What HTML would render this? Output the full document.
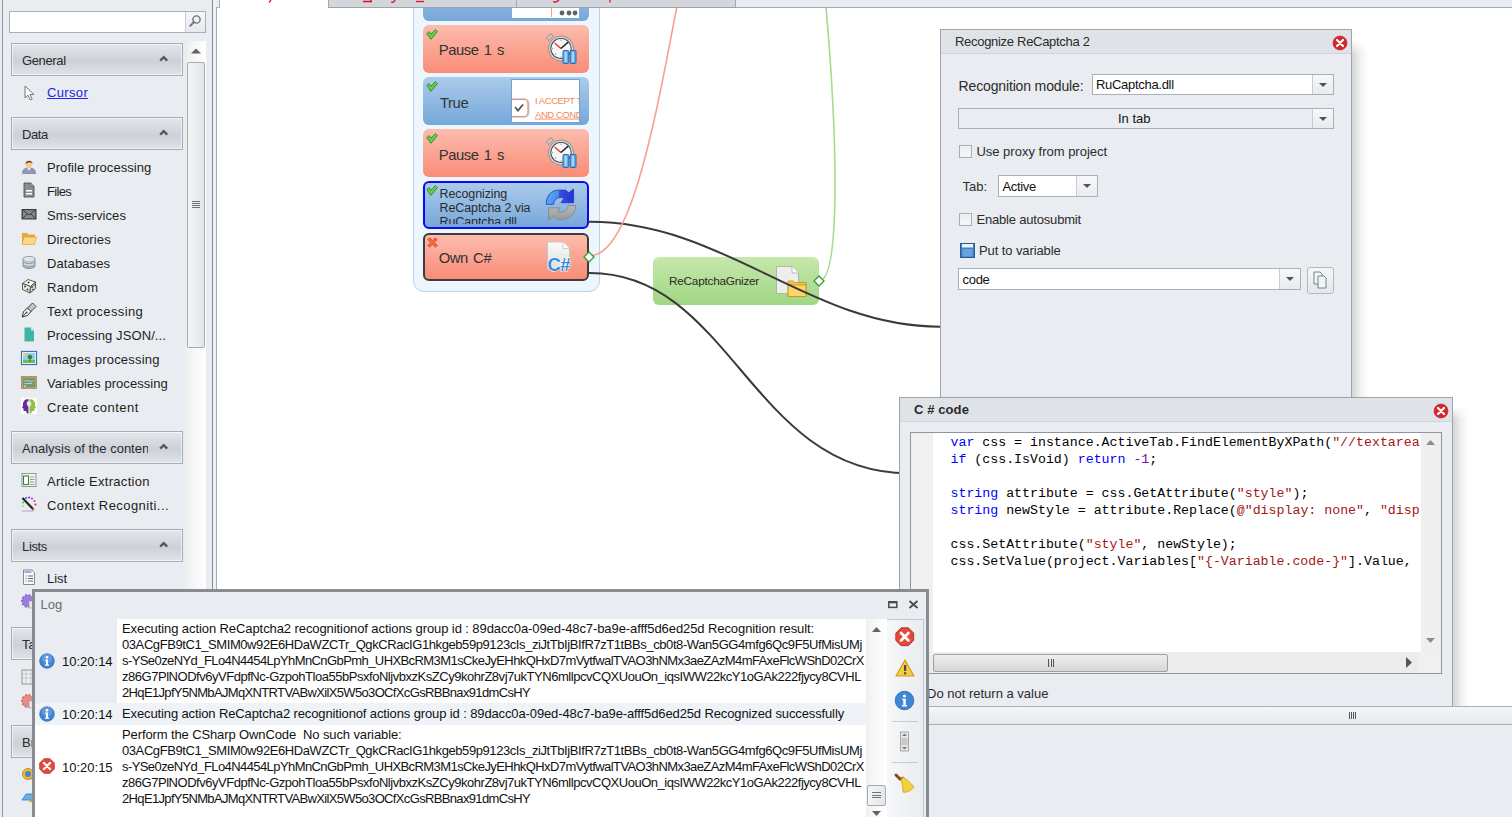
<!DOCTYPE html><html><head><meta charset="utf-8"><style>
html,body{margin:0;padding:0;width:1512px;height:817px;overflow:hidden;background:#e9ecf0;font-family:"Liberation Sans",sans-serif;}
.t{position:absolute;white-space:nowrap;}
.b{position:absolute;box-sizing:border-box;}
svg{position:absolute;overflow:visible;}
</style></head><body>
<div class="b" style="left:2px;top:0px;width:1px;height:817px;background:#8d939b"></div>
<div class="b" style="left:9px;top:11px;width:197px;height:22px;background:#fff;border:1px solid #a9b0b9"></div>
<div class="b" style="left:185px;top:12px;width:20px;height:20px;background:linear-gradient(#f5f7f9,#e6e9ed);border-left:1px solid #c9ced5"></div>
<svg style="left:188px;top:14px" width="14" height="14" viewBox="0 0 14 14"><circle cx="8.5" cy="5.5" r="3.6" fill="none" stroke="#6b7079" stroke-width="1.4"/><line x1="6" y1="8" x2="2.2" y2="11.8" stroke="#6b7079" stroke-width="1.8" stroke-linecap="round"/></svg>
<div class="b" style="left:186px;top:41px;width:20px;height:560px;background:linear-gradient(90deg,#eeeeee,#f7f7f7 40%,#fff)"></div>
<svg style="left:190px;top:47px" width="12" height="8"><polygon points="1,6.5 6,1.5 11,6.5" fill="#606469"/></svg>
<div class="b" style="left:187px;top:62px;width:18px;height:286px;background:linear-gradient(90deg,#f3f4f5,#e4e6e8);border:1px solid #a7acb3;border-radius:2px"></div>
<div class="b" style="left:192px;top:201px;width:8px;height:1px;background:#6e7379"></div>
<div class="b" style="left:192px;top:203px;width:8px;height:1px;background:#6e7379"></div>
<div class="b" style="left:192px;top:205px;width:8px;height:1px;background:#6e7379"></div>
<div class="b" style="left:192px;top:207px;width:8px;height:1px;background:#6e7379"></div>
<div class="b" style="left:212px;top:0px;width:1px;height:817px;background:#878d94"></div>
<div class="b" style="left:213px;top:0px;width:3px;height:817px;background:#eef1f4"></div>
<div class="b" style="left:216px;top:8px;width:1px;height:809px;background:#a5abb4"></div>
<div class="b" style="left:11px;top:43px;width:172px;height:33px;border:1px solid #a6adb6;background:linear-gradient(#e3e6ea,#d1d6dc 45%,#ccd1d8 55%,#e0e3e8);box-shadow:inset 0 0 0 1px rgba(255,255,255,.55)"></div>
<div class="t" style="left:22px;top:52.50px;font-size:13px;line-height:16px;color:#2b2b2b;letter-spacing:-0.364px;">General</div>
<svg style="left:158px;top:55px" width="12" height="8"><polyline points="2.2,5.6 5.7,2.1 9.2,5.6" fill="none" stroke="#55595f" stroke-width="2.4"/></svg>
<div class="b" style="left:11px;top:117px;width:172px;height:33px;border:1px solid #a6adb6;background:linear-gradient(#e3e6ea,#d1d6dc 45%,#ccd1d8 55%,#e0e3e8);box-shadow:inset 0 0 0 1px rgba(255,255,255,.55)"></div>
<div class="t" style="left:22px;top:126.50px;font-size:13px;line-height:16px;color:#2b2b2b;letter-spacing:-0.442px;">Data</div>
<svg style="left:158px;top:129px" width="12" height="8"><polyline points="2.2,5.6 5.7,2.1 9.2,5.6" fill="none" stroke="#55595f" stroke-width="2.4"/></svg>
<div class="b" style="left:11px;top:431px;width:172px;height:33px;border:1px solid #a6adb6;background:linear-gradient(#e3e6ea,#d1d6dc 45%,#ccd1d8 55%,#e0e3e8);box-shadow:inset 0 0 0 1px rgba(255,255,255,.55)"></div>
<div class="t" style="left:22px;top:440.50px;font-size:13px;line-height:16px;color:#2b2b2b;"><span style="display:inline-block;width:126px;overflow:hidden;vertical-align:top">Analysis of the content</span></div>
<svg style="left:158px;top:443px" width="12" height="8"><polyline points="2.2,5.6 5.7,2.1 9.2,5.6" fill="none" stroke="#55595f" stroke-width="2.4"/></svg>
<div class="b" style="left:11px;top:529px;width:172px;height:33px;border:1px solid #a6adb6;background:linear-gradient(#e3e6ea,#d1d6dc 45%,#ccd1d8 55%,#e0e3e8);box-shadow:inset 0 0 0 1px rgba(255,255,255,.55)"></div>
<div class="t" style="left:22px;top:538.50px;font-size:13px;line-height:16px;color:#2b2b2b;letter-spacing:-0.347px;">Lists</div>
<svg style="left:158px;top:541px" width="12" height="8"><polyline points="2.2,5.6 5.7,2.1 9.2,5.6" fill="none" stroke="#55595f" stroke-width="2.4"/></svg>
<div class="b" style="left:11px;top:627px;width:172px;height:33px;border:1px solid #a6adb6;background:linear-gradient(#e3e6ea,#d1d6dc 45%,#ccd1d8 55%,#e0e3e8);box-shadow:inset 0 0 0 1px rgba(255,255,255,.55)"></div>
<div class="t" style="left:22px;top:636.50px;font-size:13px;line-height:16px;color:#2b2b2b;">Tasks</div>
<svg style="left:158px;top:639px" width="12" height="8"><polyline points="2.2,5.6 5.7,2.1 9.2,5.6" fill="none" stroke="#55595f" stroke-width="2.4"/></svg>
<div class="b" style="left:11px;top:725px;width:172px;height:33px;border:1px solid #a6adb6;background:linear-gradient(#e3e6ea,#d1d6dc 45%,#ccd1d8 55%,#e0e3e8);box-shadow:inset 0 0 0 1px rgba(255,255,255,.55)"></div>
<div class="t" style="left:22px;top:734.50px;font-size:13px;line-height:16px;color:#2b2b2b;">Browser</div>
<svg style="left:158px;top:737px" width="12" height="8"><polyline points="2.2,5.6 5.7,2.1 9.2,5.6" fill="none" stroke="#55595f" stroke-width="2.4"/></svg>
<svg style="left:24px;top:85px" width="12" height="16" viewBox="0 0 12 16"><path d="M1,1 L1,13 L4,10.2 L6.3,15 L8.2,14.1 L6,9.5 L10,9.5 Z" fill="#fff" stroke="#777" stroke-width="1"/></svg>
<div class="t" style="left:47px;top:85.00px;font-size:13px;line-height:16px;color:#2222ee;letter-spacing:0.347px;text-decoration:underline;">Cursor</div>
<svg style="left:21px;top:158px" width="16" height="16" viewBox="0 0 16 16"><path d="M1.5,15.5 C1.5,11.2 4,10 8,10 C12,10 14.5,11.2 14.5,15.5 Z" fill="#8d98b8" stroke="#6a7496" stroke-width=".6"/><path d="M6,10.2 L8,12.5 L10,10.2" fill="#fff"/><circle cx="8" cy="6.3" r="3.3" fill="#f6c797"/><path d="M4.6,6.2 C4,2.2 11.5,1.5 11.6,5.5 C10.2,4.2 6.5,4 4.6,6.2Z" fill="#7a4414"/></svg>
<div class="t" style="left:47px;top:160.00px;font-size:13px;line-height:16px;color:#1e1e1e;letter-spacing:0.054px;">Profile processing</div>
<svg style="left:21px;top:182px" width="16" height="16" viewBox="0 0 16 16"><path d="M3,1 H10 L13,4 V15 H3 Z" fill="#8c8c8c" stroke="#505050" stroke-width=".9"/><path d="M10,1 V4 H13" fill="#c8c8c8" stroke="#505050" stroke-width=".6"/><rect x="5" y="8" width="6" height="1.5" fill="#fff"/><rect x="5" y="11" width="6" height="1.5" fill="#fff"/></svg>
<div class="t" style="left:47px;top:184.00px;font-size:13px;line-height:16px;color:#1e1e1e;letter-spacing:-0.651px;">Files</div>
<svg style="left:21px;top:206px" width="16" height="16" viewBox="0 0 16 16"><rect x="0.5" y="3" width="15" height="10.5" fill="#3e3e3e"/><rect x="1.8" y="4.2" width="12.4" height="8.1" fill="#8a8a8a"/><path d="M1.8,4.2 L8,9 L14.2,4.2 M1.8,12.3 L6.2,7.8 M14.2,12.3 L9.8,7.8" fill="none" stroke="#333" stroke-width=".9"/></svg>
<div class="t" style="left:47px;top:208.00px;font-size:13px;line-height:16px;color:#1e1e1e;letter-spacing:0.082px;">Sms-services</div>
<svg style="left:21px;top:230px" width="16" height="16" viewBox="0 0 16 16"><path d="M1,3 H6 L7.5,4.5 H14 V14 H1 Z" fill="#e8a93a"/><path d="M3,7 H15.5 L13.5,14.5 H1 Z" fill="#f9d87f" stroke="#d49a2a" stroke-width=".6"/></svg>
<div class="t" style="left:47px;top:232.00px;font-size:13px;line-height:16px;color:#1e1e1e;letter-spacing:0.161px;">Directories</div>
<svg style="left:21px;top:254px" width="16" height="16" viewBox="0 0 16 16"><rect x="2" y="2.5" width="12" height="12" rx="6" ry="2.6" fill="#b9c3cb" stroke="#7f8a93" stroke-width=".9"/><ellipse cx="8" cy="5" rx="5.5" ry="2.2" fill="#dfe5ea"/><path d="M2.2,8.5 Q8,11.5 13.8,8.5 M2.2,11.5 Q8,14.5 13.8,11.5" fill="none" stroke="#8f99a2" stroke-width=".9"/><path d="M3,9.8 Q8,12.3 13,9.8" fill="none" stroke="#e8edf0" stroke-width=".8"/></svg>
<div class="t" style="left:47px;top:256.00px;font-size:13px;line-height:16px;color:#1e1e1e;letter-spacing:0.116px;">Databases</div>
<svg style="left:21px;top:278px" width="16" height="16" viewBox="0 0 16 16"><path d="M1.5,5.5 L7,1.5 L14.5,4 L9.5,8.5 Z" fill="#fbfbf5" stroke="#4a4a4a" stroke-width=".9" stroke-linejoin="round"/><path d="M1.5,5.5 L9.5,8.5 L9,15 L1.5,11.5 Z" fill="#ecebe2" stroke="#4a4a4a" stroke-width=".9" stroke-linejoin="round"/><path d="M9.5,8.5 L14.5,4 L14.5,10.5 L9,15 Z" fill="#dcdbd0" stroke="#4a4a4a" stroke-width=".9" stroke-linejoin="round"/><circle cx="7.5" cy="4.5" r="1" fill="#333"/><circle cx="4" cy="8.5" r=".9" fill="#333"/><circle cx="6.5" cy="11.5" r=".9" fill="#333"/><circle cx="11" cy="9" r=".9" fill="#333"/><circle cx="13" cy="7" r=".8" fill="#333"/><circle cx="12" cy="11.5" r=".8" fill="#333"/></svg>
<div class="t" style="left:47px;top:280.00px;font-size:13px;line-height:16px;color:#1e1e1e;letter-spacing:0.377px;">Random</div>
<svg style="left:21px;top:302px" width="16" height="16" viewBox="0 0 16 16"><path d="M1.2,15 L2.5,9.5 L6.5,6 L10,9.5 L6.5,13.5 Z" fill="#f2f2f2" stroke="#3a3a3a" stroke-width="1"/><path d="M1.2,15 L5.2,10.8" stroke="#3a3a3a" stroke-width=".9"/><circle cx="5.5" cy="10.5" r=".9" fill="#3a3a3a"/><path d="M6.5,6 L11.5,1 L15,4.5 L10,9.5 Z" fill="#d8d8d8" stroke="#3a3a3a" stroke-width="1"/><path d="M8,4.5 L11.5,8 M9.5,3 L13,6.5" stroke="#8a8a8a" stroke-width=".8"/></svg>
<div class="t" style="left:47px;top:304.00px;font-size:13px;line-height:16px;color:#1e1e1e;letter-spacing:0.391px;">Text processing</div>
<svg style="left:21px;top:326px" width="16" height="16" viewBox="0 0 16 16"><path d="M3.5,1.5 H10 L13,4.5 V15.5 H3.5 Z" fill="#3fb5a3"/><path d="M10,1.5 L13,4.5 H10Z" fill="#c9eee8"/></svg>
<div class="t" style="left:47px;top:328.00px;font-size:13px;line-height:16px;color:#1e1e1e;letter-spacing:0.103px;">Processing JSON/...</div>
<svg style="left:21px;top:350px" width="16" height="16" viewBox="0 0 16 16"><rect x="0.5" y="1.5" width="15" height="13" fill="#fff" stroke="#3b73b9" stroke-width="1.2"/><rect x="2" y="3" width="12" height="10" fill="#8fd0f0"/><rect x="2" y="10" width="12" height="3" fill="#6fbf3f"/><circle cx="3.5" cy="4.5" r="1.5" fill="#ffd23a"/><circle cx="9" cy="7" r="2.3" fill="#2e8a2e"/><rect x="8.5" y="8.5" width="1" height="3" fill="#7a4a22"/></svg>
<div class="t" style="left:47px;top:352.00px;font-size:13px;line-height:16px;color:#1e1e1e;letter-spacing:0.21px;">Images processing</div>
<svg style="left:21px;top:374px" width="16" height="16" viewBox="0 0 16 16"><rect x="0.5" y="2.5" width="15" height="12" fill="#c49a5a" stroke="#9a7038" stroke-width=".6"/><rect x="2" y="4" width="12" height="9" fill="#6d9a7a"/><path d="M3.5,7 Q6,6 8,7 T12.5,7 M3.5,9.5 H11" stroke="#d8e8dc" stroke-width=".7" fill="none"/><path d="M3,13 L5,11" stroke="#fff" stroke-width=".8"/></svg>
<div class="t" style="left:47px;top:376.00px;font-size:13px;line-height:16px;color:#1e1e1e;letter-spacing:0.054px;">Variables processing</div>
<svg style="left:21px;top:398px" width="16" height="16" viewBox="0 0 16 16"><rect x="0" y="0" width="16" height="16" fill="#fff"/><path d="M7.5,1 C3,1 1.5,4.5 2,7.5 L1,10 L2.5,10.5 L2.5,13 L5,13 L6,15.5 L7.5,15.5 Z" fill="#6a2a9a"/><path d="M8.5,1 C13,1 14.5,4.5 14,7.5 L15,10 L13.5,10.5 L13.5,13 L11,13 L10,15.5 L8.5,15.5 Z" fill="#8fc43f"/><path d="M6,4 Q8,2.5 10,4 Q11,7 8,9 Q5,7 6,4Z" fill="#e8e8ee"/></svg>
<div class="t" style="left:47px;top:400.00px;font-size:13px;line-height:16px;color:#1e1e1e;letter-spacing:0.466px;">Create content</div>
<svg style="left:21px;top:472px" width="16" height="16" viewBox="0 0 16 16"><rect x="1" y="1.5" width="14" height="13" fill="#f4f4f4" stroke="#8d8d8d" stroke-width=".9"/><rect x="2.5" y="4" width="5" height="8.5" fill="#fff" stroke="#2e8a2e" stroke-width="1.1"/><path d="M9,5 H13.5 M9,7.5 H13.5 M9,10 H13.5 M9,12.5 H13.5" stroke="#999" stroke-width="1"/></svg>
<div class="t" style="left:47px;top:474.00px;font-size:13px;line-height:16px;color:#1e1e1e;letter-spacing:0.292px;">Article Extraction</div>
<svg style="left:21px;top:496px" width="16" height="16" viewBox="0 0 16 16"><path d="M1.5,2 L12.5,13.5" stroke="#222" stroke-width="2.2"/><path d="M11,12 L14,15 L13,12.5Z" fill="#d0a040"/><circle cx="5" cy="2" r="1.1" fill="#3b6bdb"/><circle cx="8" cy="1.5" r="1.1" fill="#7a3adb"/><circle cx="11" cy="2.5" r="1.1" fill="#b03adb"/><circle cx="13.5" cy="5" r="1.1" fill="#db3a9a"/><circle cx="14.5" cy="8.5" r="1.1" fill="#db3a3a"/><circle cx="2" cy="6.5" r="1.1" fill="#3adb5a"/><circle cx="2" cy="10" r="1.1" fill="#c8db3a"/><path d="M1,15 H13" stroke="#aa88cc" stroke-width=".8"/></svg>
<div class="t" style="left:47px;top:498.00px;font-size:13px;line-height:16px;color:#1e1e1e;letter-spacing:0.427px;">Context Recogniti...</div>
<svg style="left:21px;top:569px" width="16" height="16" viewBox="0 0 16 16"><path d="M2.5,1 H11 L13.5,3.5 V15.5 H2.5 Z" fill="#fbfbfd" stroke="#7d7d85" stroke-width=".9"/><rect x="3.5" y="2" width="7" height="2" fill="#b49ee8"/><path d="M4.5,7 H5.5 M7,7 H12 M4.5,9.5 H5.5 M7,9.5 H12 M4.5,12 H5.5 M7,12 H12" stroke="#555" stroke-width=".9"/></svg>
<div class="t" style="left:47px;top:571.00px;font-size:13px;line-height:16px;color:#1e1e1e;letter-spacing:-0.009px;">List</div>
<svg style="left:21px;top:593px" width="16" height="16" viewBox="0 0 16 16"><circle cx="7" cy="8" r="6" fill="#9b7fdc" stroke="#8a6ad0" stroke-width="2" stroke-dasharray="2 1.5"/><rect x="8" y="8" width="6" height="7" fill="#e8e8e8" stroke="#999" stroke-width=".6"/></svg>
<svg style="left:21px;top:669px" width="16" height="16" viewBox="0 0 16 16"><rect x="1" y="1" width="14" height="14" fill="#f0f0f0" stroke="#888" stroke-width=".9"/><path d="M1,5 H15 M1,9 H15 M5,1 V15 M10,1 V15" stroke="#bbb" stroke-width=".8"/></svg>
<svg style="left:21px;top:693px" width="16" height="16" viewBox="0 0 16 16"><circle cx="7" cy="8" r="6" fill="#e88a8a" stroke="#d46a6a" stroke-width="2" stroke-dasharray="2 1.5"/><rect x="8" y="8" width="6" height="7" fill="#e8e8e8" stroke="#999" stroke-width=".6"/></svg>
<svg style="left:21px;top:767px" width="16" height="16" viewBox="0 0 16 16"><circle cx="7" cy="7" r="5.5" fill="#f4b63a" stroke="#d48a1a" stroke-width="1"/><circle cx="7" cy="7" r="3" fill="#3a8ad4"/><path d="M9,11 L14,15 L15,13Z" fill="#3a7ad4"/></svg>
<svg style="left:21px;top:790px" width="16" height="16" viewBox="0 0 16 16"><path d="M1,10 L5,4 H15 L12,10 Z" fill="#6cb0e8" stroke="#3a7ac0" stroke-width=".8"/><path d="M9,12 L14,6" stroke="#d49a2a" stroke-width="2"/></svg>
<div class="b" style="left:217px;top:8px;width:1295px;height:809px;background:#fff"></div>
<div class="b" style="left:216px;top:0px;width:1296px;height:8px;background:#e9ecf0"></div>
<div class="b" style="left:216px;top:7px;width:1296px;height:1px;background:#a5abb4"></div>
<div class="b" style="left:219px;top:0px;width:109px;height:8px;background:#fff;border-left:1px solid #a5abb4"></div>
<div class="b" style="left:328px;top:0px;width:408px;height:8px;background:#d3d6db;border-left:1px solid #a0a6ae;border-right:1px solid #a0a6ae;border-bottom:1px solid #9ea4ad"></div>
<div class="b" style="left:516px;top:0px;width:1px;height:8px;background:#a0a6ae"></div>
<svg style="left:0;top:0" width="1512" height="8"><g stroke="#e0102a" stroke-width="1.3" fill="none"><path d="M271,0 L269,2.5"/><path d="M363,1.5 H372 M371,0 V2.5"/><path d="M391,2 Q394,3 395,0"/><path d="M416,1.5 H424"/><path d="M553,1.5 Q556,3 559,0"/><path d="M610,0 V2.5"/></g></svg>
<div class="b" style="left:413px;top:-20px;width:187px;height:312px;background:#edf5fd;border:1px solid #b9d3ef;border-radius:0 0 11px 11px"></div>
<div class="b" style="left:423px;top:-27px;width:166px;height:48px;background:linear-gradient(#abcbea,#76a7da);border-radius:6px"></div>
<div class="b" style="left:512px;top:8px;width:67px;height:10px;background:#fff"></div>
<div class="b" style="left:551px;top:8px;width:1px;height:9px;background:#f7a070"></div>
<svg style="left:559px;top:9.5px" width="6" height="6"><circle cx="3" cy="3" r="2.4" fill="#616161"/></svg>
<svg style="left:565.8px;top:9.5px" width="6" height="6"><circle cx="3" cy="3" r="2.4" fill="#616161"/></svg>
<svg style="left:572px;top:9.5px" width="6" height="6"><circle cx="3" cy="3" r="2.4" fill="#616161"/></svg>
<div class="b" style="left:423px;top:25px;width:166px;height:48px;background:linear-gradient(#fcbcae,#f98c77);border-radius:6px"></div>
<svg style="left:426px;top:29px" width="12" height="12" viewBox="0 0 12 12"><path d="M0.8,4.6 L3,2.6 L4.9,5.2 L9.4,0.6 L11.4,2.6 L4.9,10.4 Z" fill="#67cc48" stroke="#2b8a2a" stroke-width=".9" stroke-linejoin="round"/></svg>
<div class="t" style="left:438.7px;top:41.27px;font-size:14.8px;line-height:18px;color:#333;letter-spacing:-0.4px;word-spacing:1.5px;">Pause 1 s</div>
<svg style="left:546px;top:33.5px" width="32" height="32" viewBox="0 0 32 32">
<path d="M0.3,4.2 L4.8,-0.3 L7.2,2.1 L2.7,6.6Z" fill="#c8c8c8" stroke="#7a7a7a" stroke-width=".7"/>
<circle cx="15" cy="14.5" r="12.6" fill="#d0d0d0" stroke="#8c8c8c" stroke-width=".9"/>
<circle cx="15" cy="14.5" r="10.6" fill="#3c3c3c"/>
<circle cx="15" cy="14.5" r="9.7" fill="#f6f6f6"/>
<g fill="#9a9a9a"><rect x="14.4" y="5.6" width="1.2" height="1.2"/><rect x="6" y="14" width="1.2" height="1.2"/><rect x="9" y="19.5" width="1.2" height="1.2"/><rect x="14.4" y="22.4" width="1.2" height="1.2"/><rect x="8.5" y="8.5" width="1.2" height="1.2"/><rect x="20.5" y="8" width="1.2" height="1.2"/></g>
<line x1="15" y1="14.5" x2="9" y2="9.5" stroke="#e8200c" stroke-width="1.1"/>
<line x1="15" y1="14.5" x2="22" y2="8.3" stroke="#1e1e1e" stroke-width="1.5"/>
<rect x="17" y="16.5" width="5.8" height="13" rx="1" fill="#62aaea" stroke="#2a6cb2" stroke-width="1"/>
<rect x="24.2" y="16.5" width="5.8" height="13" rx="1" fill="#62aaea" stroke="#2a6cb2" stroke-width="1"/>
<rect x="18.6" y="18" width="2.2" height="10" fill="#a6d4fa"/><rect x="25.8" y="18" width="2.2" height="10" fill="#a6d4fa"/>
</svg>
<div class="b" style="left:423px;top:77px;width:166px;height:48px;background:linear-gradient(#abcbea,#76a7da);border-radius:6px"></div>
<svg style="left:426px;top:81px" width="12" height="12" viewBox="0 0 12 12"><path d="M0.8,4.6 L3,2.6 L4.9,5.2 L9.4,0.6 L11.4,2.6 L4.9,10.4 Z" fill="#67cc48" stroke="#2b8a2a" stroke-width=".9" stroke-linejoin="round"/></svg>
<div class="t" style="left:440px;top:93.87px;font-size:14.8px;line-height:18px;color:#333;letter-spacing:-0.4px;word-spacing:1.5px;">True</div>
<div class="b" style="left:511px;top:79px;width:69px;height:44px;background:#fff;border:1px solid #6fa3d6"></div>
<svg style="left:512px;top:80px;overflow:hidden" width="67" height="42" viewBox="0 0 67 42">
<rect x="-3" y="19.5" width="19" height="17" rx="4" fill="#fff" stroke="#bfe6fb" stroke-width="3.5"/><rect x="-3" y="19.5" width="19" height="17" rx="4" fill="#fff" stroke="#f08a50" stroke-width="1.2"/>
<path d="M3,27 L6,30.5 L11,24.5" fill="none" stroke="#555" stroke-width="1.8"/>
<text x="23" y="24" font-family="Liberation Sans" font-size="9.5" fill="#f2885a" letter-spacing="-0.45">I ACCEPT T</text>
<text x="23" y="38" font-family="Liberation Sans" font-size="9.5" fill="#f2885a" letter-spacing="-0.45">AND CONDI</text><rect x="23" y="38.6" width="44" height=".9" fill="#f2885a"/>
</svg>
<div class="b" style="left:423px;top:129px;width:166px;height:48px;background:linear-gradient(#fcbcae,#f98c77);border-radius:6px"></div>
<svg style="left:426px;top:133px" width="12" height="12" viewBox="0 0 12 12"><path d="M0.8,4.6 L3,2.6 L4.9,5.2 L9.4,0.6 L11.4,2.6 L4.9,10.4 Z" fill="#67cc48" stroke="#2b8a2a" stroke-width=".9" stroke-linejoin="round"/></svg>
<div class="t" style="left:438.7px;top:145.57px;font-size:14.8px;line-height:18px;color:#333;letter-spacing:-0.4px;word-spacing:1.5px;">Pause 1 s</div>
<svg style="left:546px;top:137.5px" width="32" height="32" viewBox="0 0 32 32">
<path d="M0.3,4.2 L4.8,-0.3 L7.2,2.1 L2.7,6.6Z" fill="#c8c8c8" stroke="#7a7a7a" stroke-width=".7"/>
<circle cx="15" cy="14.5" r="12.6" fill="#d0d0d0" stroke="#8c8c8c" stroke-width=".9"/>
<circle cx="15" cy="14.5" r="10.6" fill="#3c3c3c"/>
<circle cx="15" cy="14.5" r="9.7" fill="#f6f6f6"/>
<g fill="#9a9a9a"><rect x="14.4" y="5.6" width="1.2" height="1.2"/><rect x="6" y="14" width="1.2" height="1.2"/><rect x="9" y="19.5" width="1.2" height="1.2"/><rect x="14.4" y="22.4" width="1.2" height="1.2"/><rect x="8.5" y="8.5" width="1.2" height="1.2"/><rect x="20.5" y="8" width="1.2" height="1.2"/></g>
<line x1="15" y1="14.5" x2="9" y2="9.5" stroke="#e8200c" stroke-width="1.1"/>
<line x1="15" y1="14.5" x2="22" y2="8.3" stroke="#1e1e1e" stroke-width="1.5"/>
<rect x="17" y="16.5" width="5.8" height="13" rx="1" fill="#62aaea" stroke="#2a6cb2" stroke-width="1"/>
<rect x="24.2" y="16.5" width="5.8" height="13" rx="1" fill="#62aaea" stroke="#2a6cb2" stroke-width="1"/>
<rect x="18.6" y="18" width="2.2" height="10" fill="#a6d4fa"/><rect x="25.8" y="18" width="2.2" height="10" fill="#a6d4fa"/>
</svg>
<div class="b" style="left:423px;top:181px;width:166px;height:48px;background:linear-gradient(#abcbea,#76a7da);border:2px solid #0a0aee;border-radius:6px"></div>
<svg style="left:426px;top:185px" width="12" height="12" viewBox="0 0 12 12"><path d="M0.8,4.6 L3,2.6 L4.9,5.2 L9.4,0.6 L11.4,2.6 L4.9,10.4 Z" fill="#67cc48" stroke="#2b8a2a" stroke-width=".9" stroke-linejoin="round"/></svg>
<div class="b" style="left:439px;top:186px;width:100px;height:38px;overflow:hidden">
<div class="t" style="left:0.5px;top:0.27px;font-size:12.5px;line-height:16px;color:#2a2a2a;letter-spacing:-0.1px;">Recognizing</div>
<div class="t" style="left:0.5px;top:14.27px;font-size:12.5px;line-height:16px;color:#2a2a2a;letter-spacing:-0.1px;">ReCaptcha 2 via</div>
<div class="t" style="left:0.5px;top:28.27px;font-size:12.5px;line-height:16px;color:#2a2a2a;letter-spacing:-0.1px;">RuCaptcha.dll</div>
</div>
<svg style="left:545px;top:189px" width="32" height="32" viewBox="0 0 32 32">
<defs><linearGradient id="gb" x1="0" x2="1" y1="0" y2="0"><stop offset="0" stop-color="#5aa6f2"/><stop offset=".45" stop-color="#4a8ff0"/><stop offset=".46" stop-color="#3a4fe0"/><stop offset="1" stop-color="#2a2fcf"/></linearGradient>
<linearGradient id="gg" x1="0" x2="0" y1="0" y2="1"><stop offset="0" stop-color="#b8b8b8"/><stop offset="1" stop-color="#9a9a9a"/></linearGradient></defs>
<path d="M1.2,15.3 C1.2,6.5 6.5,1.1 13.7,1.1 L20.5,1.1 L23.8,3.8 L28,0.3 L28.6,0.3 L28.6,13.7 L16,13.7 L19,9.6 C17,8.4 15.5,8.3 14,8.6 C10.5,9.5 8.6,12 8.6,15.3 Z" fill="url(#gb)" stroke="#1f3acb" stroke-width=".8" stroke-linejoin="round"/>
<path d="M30.5,16.5 C30.5,25 25,30.2 17,30.2 L11.5,30.2 L8.2,27.5 L4,31 L3.5,31 L3.5,18.8 L15.1,18.8 L12.5,22.5 C14,23.3 15.5,23.3 17,23 C20.5,22.5 23,20 23,16.5 Z" fill="url(#gg)" stroke="#858585" stroke-width=".8" stroke-linejoin="round"/>
</svg>
<div class="b" style="left:423px;top:233px;width:166px;height:48px;background:linear-gradient(#fcbcae,#f98c77);border:2px solid #3c3c3c;border-radius:6px"></div>
<svg style="left:426.5px;top:236.5px" width="11" height="11" viewBox="0 0 11 11"><path d="M0.8,2.6 L2.6,0.8 L5.5,3.6 L8.4,0.8 L10.2,2.6 L7.3,5.5 L10.2,8.4 L8.4,10.2 L5.5,7.3 L2.6,10.2 L0.8,8.4 L3.7,5.5Z" fill="#f86a48" stroke="#d03a1e" stroke-width=".8" stroke-linejoin="round"/></svg>
<div class="t" style="left:438.7px;top:249.27px;font-size:14.8px;line-height:18px;color:#333;letter-spacing:-0.4px;word-spacing:1.5px;">Own C#</div>
<svg style="left:546px;top:241px" width="32" height="32" viewBox="0 0 32 32">
<defs><linearGradient id="gd" x1="0" x2="0" y1="0" y2="1"><stop offset="0" stop-color="#fafafa"/><stop offset="1" stop-color="#dedede"/></linearGradient></defs>
<path d="M1.5,1 L17,1 L23.5,7.5 L23.5,28 L1.5,28 Z" fill="url(#gd)" stroke="#c2c2c2" stroke-width=".8"/>
<path d="M17,1 L17,7.5 L23.5,7.5" fill="#fff" stroke="#c2c2c2" stroke-width=".8"/>
<text x="1.5" y="29.5" font-family="Liberation Sans" font-weight="bold" font-size="18.5" fill="#3b8ad6" stroke="#fff" stroke-width="1.2" paint-order="stroke" letter-spacing="-0.5">C#</text>
</svg>
<div class="b" style="left:653px;top:257px;width:166px;height:48px;background:linear-gradient(#c6e8ac,#a0d683);border-radius:6px"></div>
<div class="t" style="left:669px;top:274.41px;font-size:11.8px;line-height:15px;color:#2a2a2a;letter-spacing:-0.25px;">ReCaptchaGnizer</div>
<svg style="left:775px;top:265px" width="34" height="34" viewBox="0 0 34 34">
<path d="M1.5,1.5 L17,1.5 L23.5,8 L23.5,28.5 L1.5,28.5 Z" fill="#eeeeee" stroke="#a8a8a8" stroke-width=".8"/>
<path d="M17,1.5 L17,8 L23.5,8" fill="#fff" stroke="#a8a8a8" stroke-width=".8"/>
<path d="M13,16 L18.5,16 L20,17.5 L31,17.5 L31,31.5 L13,31.5 Z" fill="#f5c14a" stroke="#c8901e" stroke-width=".8"/>
<rect x="13" y="20" width="18" height="11.5" fill="#fbd56a" stroke="#c8901e" stroke-width=".8"/>
</svg>
<svg style="left:0;top:0" width="1512" height="817">
<path d="M588,221.8 L590.0,221.8 C725.5,221.8 808.8,326.7 940.0,326.7 L960,326.7" fill="none" stroke="#3a3a3a" stroke-width="2"/>
<path d="M588,273 L590.0,273 C730.9,273.0 752.1,473.3 908.4,473.3 L920,473.3" fill="none" stroke="#3a3a3a" stroke-width="2"/>
<path d="M590.0,255.6 C653.9,255.6 678.5,-83.0 703.7,-83.0" fill="none" stroke="#f8a08e" stroke-width="1.6"/>
<path d="M819.0,280.8 C861.0,280.8 811.2,-259.5 774.7,-259.5" fill="none" stroke="#a6dc8c" stroke-width="1.6"/>
<polygon points="589,252 594,257 589,262 584,257" fill="#fff" stroke="#38a03a" stroke-width="1.4"/>
<polygon points="819,276 824,281 819,286 814,281" fill="#fff" stroke="#38a03a" stroke-width="1.4"/>
</svg>
<div class="b" style="left:216px;top:0px;width:1296px;height:7px;background:#e9ecf0"></div>
<div class="b" style="left:216px;top:7px;width:1296px;height:1px;background:#a5abb4"></div>
<div class="b" style="left:219px;top:0px;width:109px;height:8px;background:#fff;border-left:1px solid #a5abb4"></div>
<div class="b" style="left:328px;top:0px;width:408px;height:8px;background:#d3d6db;border-left:1px solid #a0a6ae;border-right:1px solid #a0a6ae;border-bottom:1px solid #9ea4ad"></div>
<div class="b" style="left:516px;top:0px;width:1px;height:8px;background:#a0a6ae"></div>
<svg style="left:0;top:0" width="1512" height="8"><g stroke="#e0102a" stroke-width="1.3" fill="none"><path d="M271,0 L269,2.5"/><path d="M363,1.5 H372 M371,0 V2.5"/><path d="M391,2 Q394,3 395,0"/><path d="M416,1.5 H424"/><path d="M553,1.5 Q556,3 559,0"/><path d="M610,0 V2.5"/></g></svg>
<div class="b" style="left:1352px;top:40px;width:16px;height:365px;background:linear-gradient(90deg,rgba(0,0,0,.17),rgba(0,0,0,.06) 50%,rgba(0,0,0,0));-webkit-mask-image:linear-gradient(to bottom,transparent,#000 14px)"></div>
<div class="b" style="left:940px;top:29px;width:412px;height:381px;background:#e9ecf0;border:1px solid #9ca3ac"></div>
<div class="b" style="left:941px;top:30px;width:410px;height:24px;background:#dfe3e8;border-bottom:1px solid #cfd4da"></div>
<div class="t" style="left:955px;top:33.90px;font-size:13px;line-height:16px;color:#2b2b2b;letter-spacing:-0.3px;">Recognize ReCaptcha 2</div>
<svg style="left:1332px;top:35px" width="16" height="16" viewBox="0 0 16 16">
<circle cx="8" cy="8" r="7" fill="#d9252a" stroke="#b01a1e" stroke-width=".6"/>
<path d="M5,5 L11,11 M11,5 L5,11" stroke="#fff" stroke-width="2.2" stroke-linecap="round"/></svg>
<div class="t" style="left:958.6px;top:77.35px;font-size:14px;line-height:18px;color:#2b2b2b;letter-spacing:-0.15px;">Recognition module:</div>
<div class="b" style="left:1092px;top:74px;width:242px;height:21px;background:#fff;border:1px solid #a9b0b9"></div>
<div class="b" style="left:1312px;top:75px;width:21px;height:19px;background:linear-gradient(#f7f8fa,#e8ebef);border-left:1px solid #c8cdd4"></div>
<svg style="left:1317.5px;top:81.5px" width="10" height="6"><polygon points="1,1 9,1 5,5" fill="#505459"/></svg>
<div class="t" style="left:1096px;top:76.50px;font-size:13px;line-height:16px;color:#111;letter-spacing:-0.3px;">RuCaptcha.dll</div>
<div class="b" style="left:958px;top:108px;width:376px;height:21px;background:#e9ecf0;border:1px solid #a9b0b9"></div>
<div class="b" style="left:1312px;top:109px;width:21px;height:19px;background:linear-gradient(#f7f8fa,#e8ebef);border-left:1px solid #c8cdd4"></div>
<svg style="left:1317.5px;top:115.5px" width="10" height="6"><polygon points="1,1 9,1 5,5" fill="#505459"/></svg>
<div class="t" style="left:1118px;top:111.00px;font-size:13px;line-height:16px;color:#111;">In tab</div>
<div class="b" style="left:959px;top:145px;width:13px;height:13px;background:linear-gradient(#e9ebee,#f6f7f9);border:1px solid #a8aeb6;box-shadow:inset 0 0 0 1px #f2f3f5"></div>
<div class="t" style="left:976.4px;top:143.50px;font-size:13px;line-height:16px;color:#2b2b2b;">Use proxy from project</div>
<div class="t" style="left:962.5px;top:178.50px;font-size:13px;line-height:16px;color:#2b2b2b;">Tab:</div>
<div class="b" style="left:998px;top:175px;width:100px;height:22px;background:#fff;border:1px solid #a9b0b9"></div>
<div class="b" style="left:1076px;top:176px;width:21px;height:20px;background:linear-gradient(#f7f8fa,#e8ebef);border-left:1px solid #c8cdd4"></div>
<svg style="left:1081.5px;top:183.0px" width="10" height="6"><polygon points="1,1 9,1 5,5" fill="#505459"/></svg>
<div class="t" style="left:1002.4px;top:178.50px;font-size:13px;line-height:16px;color:#111;letter-spacing:-0.3px;">Active</div>
<div class="b" style="left:959px;top:213px;width:13px;height:13px;background:linear-gradient(#e9ebee,#f6f7f9);border:1px solid #a8aeb6;box-shadow:inset 0 0 0 1px #f2f3f5"></div>
<div class="t" style="left:976.4px;top:211.50px;font-size:13px;line-height:16px;color:#2b2b2b;letter-spacing:-0.18px;">Enable autosubmit</div>
<svg style="left:960px;top:243px" width="15" height="15" viewBox="0 0 15 15"><rect x=".5" y=".5" width="14" height="14" fill="#3f7fc8" stroke="#2a5a98" stroke-width="1"/><rect x="2" y="1" width="11" height="3.5" fill="#eef3f8"/><rect x="2.5" y="6" width="10" height="7.5" fill="#6aa0dc"/></svg>
<div class="t" style="left:979px;top:242.50px;font-size:13px;line-height:16px;color:#2b2b2b;letter-spacing:-0.1px;">Put to variable</div>
<div class="b" style="left:958px;top:268px;width:343px;height:22px;background:#fff;border:1px solid #a9b0b9"></div>
<div class="b" style="left:1279px;top:269px;width:21px;height:20px;background:linear-gradient(#f7f8fa,#e8ebef);border-left:1px solid #c8cdd4"></div>
<svg style="left:1284.5px;top:276.0px" width="10" height="6"><polygon points="1,1 9,1 5,5" fill="#505459"/></svg>
<div class="t" style="left:962.5px;top:271.50px;font-size:13px;line-height:16px;color:#111;letter-spacing:-0.3px;">code</div>
<div class="b" style="left:1307px;top:267px;width:27px;height:27px;background:linear-gradient(#f5f6f8,#e4e7eb);border:1px solid #b3b9c1;border-radius:3px"></div>
<svg style="left:1312px;top:271px" width="18" height="18" viewBox="0 0 18 18"><path d="M2,1 H8 L10,3 V13 H2Z" fill="#f4f6f6" stroke="#5f7a78" stroke-width=".9"/><path d="M6,5 H12 L14,7 V17 H6Z" fill="#f4f6f6" stroke="#5f7a78" stroke-width=".9"/></svg>
<div class="b" style="left:1453px;top:406px;width:16px;height:300px;background:linear-gradient(90deg,rgba(0,0,0,.17),rgba(0,0,0,.06) 50%,rgba(0,0,0,0));-webkit-mask-image:linear-gradient(to bottom,transparent,#000 14px)"></div>
<div class="b" style="left:899px;top:397px;width:554px;height:309px;background:#e9ecf0;border:1px solid #9ca3ac;border-bottom:none"></div>
<div class="b" style="left:900px;top:398px;width:552px;height:24px;background:#dfe3e8;border-bottom:1px solid #cfd4da"></div>
<div class="t" style="left:914px;top:401.50px;font-size:13px;line-height:16px;color:#2b2b2b;letter-spacing:0.1px;font-weight:bold;">C # code</div>
<svg style="left:1433px;top:403px" width="16" height="16" viewBox="0 0 16 16">
<circle cx="8" cy="8" r="7" fill="#d9252a" stroke="#b01a1e" stroke-width=".6"/>
<path d="M5,5 L11,11 M11,5 L5,11" stroke="#fff" stroke-width="2.2" stroke-linecap="round"/></svg>
<div class="b" style="left:910px;top:432px;width:532px;height:242px;background:#fff;border:1px solid #8f959c"></div>
<div class="b" style="left:911px;top:433px;width:22px;height:219px;background:#f0f0f0"></div>
<div class="b" style="left:933px;top:433px;width:487px;height:219px;overflow:hidden">
<div class="t" style="left:17.5px;top:0.71px;font-size:13.25px;line-height:17px;color:#000;font-family:'Liberation Mono',monospace;white-space:pre;"><span style="color:#0000ff">var</span> css = instance.ActiveTab.FindElementByXPath(<span style="color:#a31515">"//textarea[@id='g-recaptcha-response']"</span>);</div>
<div class="t" style="left:17.5px;top:17.71px;font-size:13.25px;line-height:17px;color:#000;font-family:'Liberation Mono',monospace;white-space:pre;"><span style="color:#0000ff">if</span> (css.IsVoid) <span style="color:#0000ff">return</span> <span style="color:#7a0aa0">-1</span>;</div>
<div class="t" style="left:17.5px;top:51.71px;font-size:13.25px;line-height:17px;color:#000;font-family:'Liberation Mono',monospace;white-space:pre;"><span style="color:#0000ff">string</span> attribute = css.GetAttribute(<span style="color:#a31515">"style"</span>);</div>
<div class="t" style="left:17.5px;top:68.71px;font-size:13.25px;line-height:17px;color:#000;font-family:'Liberation Mono',monospace;white-space:pre;"><span style="color:#0000ff">string</span> newStyle = attribute.Replace(<span style="color:#a31515">@"display: none"</span>, <span style="color:#a31515">"display: block"</span>);</div>
<div class="t" style="left:17.5px;top:102.71px;font-size:13.25px;line-height:17px;color:#000;font-family:'Liberation Mono',monospace;white-space:pre;">css.SetAttribute(<span style="color:#a31515">"style"</span>, newStyle);</div>
<div class="t" style="left:17.5px;top:119.71px;font-size:13.25px;line-height:17px;color:#000;font-family:'Liberation Mono',monospace;white-space:pre;">css.SetValue(project.Variables[<span style="color:#a31515">"{-Variable.code-}"</span>].Value, <span style="color:#0000ff">true</span>);</div>
</div>
<div class="b" style="left:1421px;top:433px;width:20px;height:219px;background:#efefef"></div>
<svg style="left:1425px;top:439px" width="11" height="7"><polygon points="1,6 5.5,1 10,6" fill="#8c8c8c"/></svg>
<svg style="left:1425px;top:637px" width="11" height="7"><polygon points="1,1 10,1 5.5,6" fill="#8c8c8c"/></svg>
<div class="b" style="left:911px;top:652px;width:508px;height:21px;background:#ececec"></div>
<div class="b" style="left:933px;top:654px;width:235px;height:18px;background:linear-gradient(#eeeeee,#d6d6d6);border:1px solid #a0a0a0;border-radius:2px"></div>
<div class="b" style="left:1048.0px;top:659px;width:1px;height:8px;background:#555"></div>
<div class="b" style="left:1050.5px;top:659px;width:1px;height:8px;background:#555"></div>
<div class="b" style="left:1053.0px;top:659px;width:1px;height:8px;background:#555"></div>
<svg style="left:1405px;top:656px" width="8" height="13"><polygon points="1,1 7,6.5 1,12" fill="#555"/></svg>
<div class="b" style="left:1419px;top:652px;width:22px;height:21px;background:#f0f0f0"></div>
<div class="t" style="left:927px;top:686.20px;font-size:13px;line-height:16px;color:#2b2b2b;">Do not return a value</div>
<div class="b" style="left:217px;top:706px;width:1295px;height:111px;background:#e9ecf0"></div>
<div class="b" style="left:217px;top:706px;width:1295px;height:19px;background:linear-gradient(#f4f5f6,#e6e8eb);border-top:1px solid #a9aeb5;border-bottom:1px solid #a9aeb5"></div>
<div class="b" style="left:1349px;top:712px;width:1px;height:7px;background:#555"></div>
<div class="b" style="left:1351px;top:712px;width:1px;height:7px;background:#555"></div>
<div class="b" style="left:1353px;top:712px;width:1px;height:7px;background:#555"></div>
<div class="b" style="left:1355px;top:712px;width:1px;height:7px;background:#555"></div>
<div class="b" style="left:32px;top:589px;width:897px;height:240px;background:#e9ecf0;border:3px solid #878c93"></div>
<div class="t" style="left:40.6px;top:596.50px;font-size:13px;line-height:16px;color:#6d6d6d;">Log</div>
<svg style="left:887px;top:600px" width="11" height="9"><rect x="1.8" y="1.8" width="8" height="5.6" fill="none" stroke="#4a4a4a" stroke-width="1.5"/><line x1="1.8" y1="2.2" x2="9.8" y2="2.2" stroke="#4a4a4a" stroke-width="2.2"/></svg>
<svg style="left:908px;top:600px" width="11" height="9"><path d="M1.5,1 L9.5,8 M9.5,1 L1.5,8" stroke="#4a4a4a" stroke-width="1.8"/></svg>
<div class="b" style="left:35px;top:619px;width:831px;height:200px;background:#fff"></div>
<div class="b" style="left:35px;top:619px;width:82px;height:84px;background:#e9ecf0"></div>
<div class="b" style="left:35px;top:703px;width:831px;height:22px;background:#eff2f7"></div>
<svg style="left:38.5px;top:652.5px" width="16" height="16" viewBox="0 0 16 16">
<circle cx="8" cy="8" r="7.3" fill="#3f86d6" stroke="#2a64b0" stroke-width=".7"/>
<circle cx="8" cy="5.5" r="5" fill="rgba(255,255,255,.18)"/>
<circle cx="8" cy="4.3" r="1.3" fill="#fff"/><path d="M6.3,6.5 H9 V11.5 H10 V12.8 H6 V11.5 H7 V7.8 H6.3Z" fill="#fff"/></svg>
<div class="t" style="left:62px;top:653.50px;font-size:13px;line-height:16px;color:#111;">10:20:14</div>
<div class="t" style="left:122px;top:621.10px;font-size:13px;line-height:16px;color:#111;letter-spacing:-0.085px;">Executing action ReCaptcha2 recognitionof actions group id : 89dacc0a-09ed-48c7-ba9e-afff5d6ed25d Recognition result:</div>
<div class="t" style="left:122px;top:637.10px;font-size:13px;line-height:16px;color:#111;letter-spacing:-0.418px;">03ACgFB9tC1_SMIM0w92E6HDaWZCTr_QgkCRacIG1hkgeb59p9123cIs_ziJtTbIjBIfR7zT1tBBs_cb0t8-Wan5GG4mfg6Qc9F5UfMisUMj</div>
<div class="t" style="left:122px;top:653.10px;font-size:13px;line-height:16px;color:#111;letter-spacing:-0.581px;">s-YSe0zeNYd_FLo4N4454LpYhMnCnGbPmh_UHXBcRM3M1sCkeJyEHhkQHxD7mVytfwalTVAO3hNMx3aeZAzM4mFAxeFlcWShD02CrX</div>
<div class="t" style="left:122px;top:669.10px;font-size:13px;line-height:16px;color:#111;letter-spacing:-0.47px;">z86G7PlNODfv6yVFdpfNc-GzpohTloa55bPsxfoNljvbxzKsZCy9kohrZ8vj7ukTYN6mllpcvCQXUouOn_iqsIWW22kcY1oGAk222fjycy8CVHL</div>
<div class="t" style="left:122px;top:685.10px;font-size:13px;line-height:16px;color:#111;letter-spacing:-0.653px;">2HqE1JpfY5NMbAJMqXNTRTVABwXilX5W5o3OCfXcGsRBBnax91dmCsHY</div>
<svg style="left:38.5px;top:705.5px" width="16" height="16" viewBox="0 0 16 16">
<circle cx="8" cy="8" r="7.3" fill="#3f86d6" stroke="#2a64b0" stroke-width=".7"/>
<circle cx="8" cy="5.5" r="5" fill="rgba(255,255,255,.18)"/>
<circle cx="8" cy="4.3" r="1.3" fill="#fff"/><path d="M6.3,6.5 H9 V11.5 H10 V12.8 H6 V11.5 H7 V7.8 H6.3Z" fill="#fff"/></svg>
<div class="t" style="left:62px;top:707.00px;font-size:13px;line-height:16px;color:#111;">10:20:14</div>
<div class="t" style="left:122px;top:705.50px;font-size:13px;line-height:16px;color:#111;letter-spacing:-0.121px;">Executing action ReCaptcha2 recognitionof actions group id : 89dacc0a-09ed-48c7-ba9e-afff5d6ed25d Recognized successfully</div>
<svg style="left:38.5px;top:758.0px" width="16" height="16" viewBox="0 0 16 16">
<polygon points="5,0.7 11,0.7 15.3,5 15.3,11 11,15.3 5,15.3 0.7,11 0.7,5" fill="#e24a3e" stroke="#b8302a" stroke-width=".8"/>
<path d="M5,5 L11,11 M11,5 L5,11" stroke="#fff" stroke-width="2.3" stroke-linecap="round"/></svg>
<div class="t" style="left:62px;top:760.00px;font-size:13px;line-height:16px;color:#111;">10:20:15</div>
<div class="t" style="left:122px;top:727.00px;font-size:13px;line-height:16px;color:#111;letter-spacing:-0.115px;">Perform the CSharp OwnCode&nbsp; No such variable:</div>
<div class="t" style="left:122px;top:743.00px;font-size:13px;line-height:16px;color:#111;letter-spacing:-0.418px;">03ACgFB9tC1_SMIM0w92E6HDaWZCTr_QgkCRacIG1hkgeb59p9123cIs_ziJtTbIjBIfR7zT1tBBs_cb0t8-Wan5GG4mfg6Qc9F5UfMisUMj</div>
<div class="t" style="left:122px;top:759.00px;font-size:13px;line-height:16px;color:#111;letter-spacing:-0.581px;">s-YSe0zeNYd_FLo4N4454LpYhMnCnGbPmh_UHXBcRM3M1sCkeJyEHhkQHxD7mVytfwalTVAO3hNMx3aeZAzM4mFAxeFlcWShD02CrX</div>
<div class="t" style="left:122px;top:775.00px;font-size:13px;line-height:16px;color:#111;letter-spacing:-0.47px;">z86G7PlNODfv6yVFdpfNc-GzpohTloa55bPsxfoNljvbxzKsZCy9kohrZ8vj7ukTYN6mllpcvCQXUouOn_iqsIWW22kcY1oGAk222fjycy8CVHL</div>
<div class="t" style="left:122px;top:791.00px;font-size:13px;line-height:16px;color:#111;letter-spacing:-0.653px;">2HqE1JpfY5NMbAJMqXNTRTVABwXilX5W5o3OCfXcGsRBBnax91dmCsHY</div>
<div class="b" style="left:866px;top:619px;width:21px;height:200px;background:linear-gradient(90deg,#efefef,#f8f8f8 40%,#fff)"></div>
<svg style="left:871px;top:626px" width="11" height="7"><polygon points="1,6 5.5,1 10,6" fill="#606469"/></svg>
<div class="b" style="left:867px;top:785px;width:19px;height:21px;background:linear-gradient(90deg,#f3f4f5,#e4e6e8);border:1px solid #a7acb3;border-radius:2px"></div>
<div class="b" style="left:872px;top:792.0px;width:9px;height:1px;background:#6e7379"></div>
<div class="b" style="left:872px;top:794.5px;width:9px;height:1px;background:#6e7379"></div>
<div class="b" style="left:872px;top:797.0px;width:9px;height:1px;background:#6e7379"></div>
<svg style="left:871px;top:810px" width="11" height="7"><polygon points="1,1 10,1 5.5,6" fill="#606469"/></svg>
<div class="b" style="left:887px;top:619px;width:37px;height:200px;background:linear-gradient(90deg,#f6f7f9,#e9ecf0);border-right:1px solid #c5cad1;border-top:1px solid #c5cad1"></div>
<svg style="left:894.75px;top:626.75px" width="19.5" height="19.5" viewBox="0 0 16 16">
<polygon points="5,0.7 11,0.7 15.3,5 15.3,11 11,15.3 5,15.3 0.7,11 0.7,5" fill="#e24a3e" stroke="#b8302a" stroke-width=".8"/>
<path d="M5,5 L11,11 M11,5 L5,11" stroke="#fff" stroke-width="2.3" stroke-linecap="round"/></svg>
<svg style="left:895px;top:659px" width="20" height="18" viewBox="0 0 20 18"><path d="M10,1 L19,17 H1Z" fill="#f6cc3a" stroke="#d69a20" stroke-width="1.2" stroke-linejoin="round"/><rect x="9" y="6" width="2.2" height="6" fill="#3a4a6a"/><rect x="9" y="13.3" width="2.2" height="2" fill="#3a4a6a"/></svg>
<svg style="left:894px;top:690px" width="21" height="21" viewBox="0 0 21 21"><circle cx="10.5" cy="10.5" r="9.3" fill="#3f86d6" stroke="#2a64b0" stroke-width=".8"/><circle cx="10.5" cy="6" r="1.6" fill="#fff"/><path d="M8.3,8.8 H11.8 V15 H13 V16.5 H8 V15 H9.3 V10.3 H8.3Z" fill="#fff"/></svg>
<div class="b" style="left:892px;top:721px;width:26px;height:1px;background:#c6cbd2"></div>
<svg style="left:899px;top:731px" width="11" height="22" viewBox="0 0 11 22"><rect x="1.5" y="1" width="8" height="19" fill="#e6e6e6" stroke="#9a9a9a" stroke-width=".8"/><rect x="2.5" y="7" width="6" height="7" fill="#c8c8c8"/><polygon points="3,5 5.5,2.5 8,5" fill="#777"/><polygon points="3,16 8,16 5.5,18.5" fill="#777"/></svg>
<div class="b" style="left:892px;top:762px;width:26px;height:1px;background:#c6cbd2"></div>
<svg style="left:894px;top:772px" width="22" height="22" viewBox="0 0 22 22"><path d="M2,3 L6,7" stroke="#8a4a18" stroke-width="3" stroke-linecap="round"/><path d="M6,6 L9,4.5 L11,7 L9,9 Z" fill="#c0302a"/><path d="M9,5 C12,7 17,11 20,15 C17,19 12,21 9,20 C9,15 8,10 7,8Z" fill="#f2d33a" stroke="#c89a18" stroke-width=".8"/></svg>
</body></html>
